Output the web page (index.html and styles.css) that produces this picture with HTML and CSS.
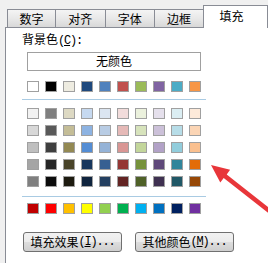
FILE: index.html
```html
<!DOCTYPE html>
<html>
<head>
<meta charset="utf-8">
<link rel="stylesheet" href="styles.css">
</head>
<body>
<div class="tabs">
  <div class="tab t1">数字</div>
  <div class="tab t2">对齐</div>
  <div class="tab t3">字体</div>
  <div class="tab t4">边框</div>
  <div class="tab sel">填充</div>
</div>
<div class="panel">
  <div class="label">背景色<span class="a">(<u>C</u>):</span></div>
  <div class="nocolor">无颜色</div>
  <div class="row first">
    <i style="background:#ffffff"></i><i style="background:#000000"></i><i style="background:#eeece1"></i><i style="background:#1f497d"></i><i style="background:#4f81bd"></i><i style="background:#c0504d"></i><i style="background:#9bbb59"></i><i style="background:#8064a2"></i><i style="background:#4bacc6"></i><i style="background:#f79646"></i>
  </div>
  <div class="sep s1"></div>
  <div class="grid">
    <i style="background:#f2f2f2"></i><i style="background:#7f7f7f"></i><i style="background:#ddd9c3"></i><i style="background:#c6d9f0"></i><i style="background:#dbe5f1"></i><i style="background:#f2dcdb"></i><i style="background:#ebf1dd"></i><i style="background:#e5e0ec"></i><i style="background:#dbeef3"></i><i style="background:#fdeada"></i>
    <i style="background:#d8d8d8"></i><i style="background:#595959"></i><i style="background:#c4bd97"></i><i style="background:#8db3e2"></i><i style="background:#b8cce4"></i><i style="background:#e5b9b7"></i><i style="background:#d7e3bc"></i><i style="background:#ccc1d9"></i><i style="background:#b7dde8"></i><i style="background:#fbd5b5"></i>
    <i style="background:#bfbfbf"></i><i style="background:#3f3f3f"></i><i style="background:#938953"></i><i style="background:#548dd4"></i><i style="background:#95b3d7"></i><i style="background:#d99694"></i><i style="background:#c3d69b"></i><i style="background:#b2a2c7"></i><i style="background:#92cddc"></i><i style="background:#fac08f"></i>
    <i style="background:#a5a5a5"></i><i style="background:#262626"></i><i style="background:#494429"></i><i style="background:#17365d"></i><i style="background:#366092"></i><i style="background:#953734"></i><i style="background:#76923c"></i><i style="background:#5f497a"></i><i style="background:#31859b"></i><i style="background:#e36c09"></i>
    <i style="background:#7f7f7f"></i><i style="background:#0c0c0c"></i><i style="background:#1d1b10"></i><i style="background:#0f243e"></i><i style="background:#244061"></i><i style="background:#632423"></i><i style="background:#4f6128"></i><i style="background:#3f3151"></i><i style="background:#205867"></i><i style="background:#974806"></i>
  </div>
  <div class="sep s2"></div>
  <div class="row std">
    <i style="background:#c00000"></i><i style="background:#ff0000"></i><i style="background:#ffc000"></i><i style="background:#ffff00"></i><i style="background:#92d050"></i><i style="background:#00b050"></i><i style="background:#00b0f0"></i><i style="background:#0070c0"></i><i style="background:#002060"></i><i style="background:#7030a0"></i>
  </div>
  <div class="buttons">
    <div class="btn">填充效果<span class="a">(<u>I</u>)...</span></div>
    <div class="btn">其他颜色<span class="a">(<u>M</u>)...</span></div>
  </div>
</div>
<svg class="arrow" width="268" height="263" viewBox="0 0 268 263">
  <polygon fill="#e8363a" points="211,165 230.1,169.8 226.7,174.6 291.5,225.3 288.5,228.8 223.7,178.1 220.3,182.4"/>
</svg>
</body>
</html>
```
FILE: styles.css
```css
html, body {
  margin: 0;
  padding: 0;
}
body {
  width: 268px;
  height: 263px;
  overflow: hidden;
  position: relative;
  background: #f0f0f0;
  font-family: "Noto Sans CJK SC", sans-serif;
  font-size: 12px;
  color: #000;
}
.a {
  font-family: "Liberation Mono", monospace;
  font-size: 12px;
  letter-spacing: -1.2px;
}
.tabs {
  display: flex;
  align-items: flex-end;
  height: 27px;
  padding-left: 7px;
  box-sizing: border-box;
  position: relative;
  z-index: 2;
}
.tab {
  height: 18px;
  box-sizing: border-box;
  border: 1px solid #898c95;
  border-bottom: 0;
  margin-left: -1px;
  display: flex;
  align-items: center;
  justify-content: center;
  line-height: 14px;
  background: linear-gradient(#f4f4f4, #e8e8e8 50%, #d8d8d8);
}
.t1 { width: 53px; margin-left: 0; }
.t2 { width: 55px; }
.t3 { width: 55px; }
.t4 { width: 54px; }
.sel {
  width: 70px;
  height: 23px;
  margin-bottom: -1px;
  background: #fff;
  align-items: flex-start;
  padding-top: 3px;
  padding-right: 8px;
}
.panel {
  margin-left: 5px;
  height: 236px;
  box-sizing: border-box;
  border-left: 1px solid #898c95;
  border-top: 1px solid #898c95;
  background: #fff;
  display: flex;
  flex-direction: column;
  align-items: flex-start;
}
.label {
  margin-left: 16px;
  margin-top: 4px;
  height: 14px;
  line-height: 14px;
}
.nocolor {
  margin-left: 21px;
  margin-top: 6px;
  width: 174px;
  height: 19px;
  box-sizing: border-box;
  border: 1px solid #a0a0a0;
  text-align: center;
  line-height: 16px;
}
.row, .grid {
  margin-left: 21px;
  display: grid;
  grid-template-columns: repeat(10, 12px);
  grid-auto-rows: 11px;
  column-gap: 6px;
  row-gap: 6px;
}
.row i, .grid i {
  display: block;
  box-sizing: border-box;
  border: 1px solid #a0a0a0;
}
.first { margin-top: 10px; }
.sep {
  margin-left: 16px;
  width: 184px;
  height: 1px;
  background: #a9cbe3;
}
.s1 { margin-top: 7px; }
.grid { margin-top: 8px; }
.s2 { margin-top: 9px; }
.std { margin-top: 6px; }
.buttons {
  margin-top: 18px;
  margin-left: 17px;
  display: flex;
  column-gap: 13px;
}
.btn {
  width: 99px;
  height: 20px;
  box-sizing: border-box;
  border: 1px solid #707070;
  border-radius: 3px;
  background: linear-gradient(#f2f2f2, #ebebeb 50%, #dddddd 51%, #cfcfcf);
  display: flex;
  align-items: center;
  justify-content: center;
  line-height: 14px;
}
.arrow {
  position: absolute;
  left: 0;
  top: 0;
  z-index: 5;
}
```
